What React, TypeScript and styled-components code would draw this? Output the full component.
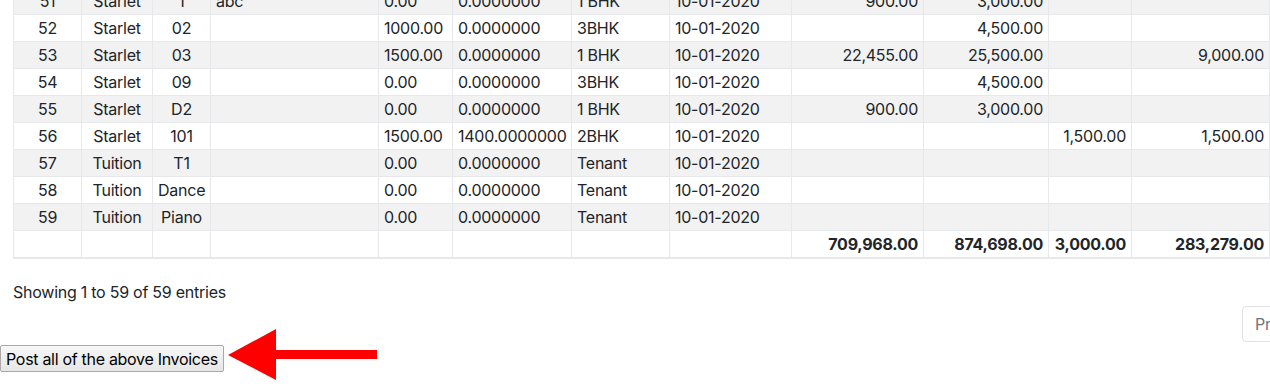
import React from 'react';
import styled, {createGlobalStyle} from "styled-components";

type Row = {
    no: string;
    group: string;
    unit: string;
    note?: string;
    rate: string;
    area: string;
    type: string;
    date: string;
    a?: string;
    b?: string;
    c?: string;
    d?: string;
}

const rows: Row[] = [
    {no: "51", group: "Starlet", unit: "1", note: "abc", rate: "0.00", area: "0.0000000", type: "1 BHK", date: "10-01-2020", a: "900.00", b: "3,000.00"},
    {no: "52", group: "Starlet", unit: "02", rate: "1000.00", area: "0.0000000", type: "3BHK", date: "10-01-2020", b: "4,500.00"},
    {no: "53", group: "Starlet", unit: "03", rate: "1500.00", area: "0.0000000", type: "1 BHK", date: "10-01-2020", a: "22,455.00", b: "25,500.00", d: "9,000.00"},
    {no: "54", group: "Starlet", unit: "09", rate: "0.00", area: "0.0000000", type: "3BHK", date: "10-01-2020", b: "4,500.00"},
    {no: "55", group: "Starlet", unit: "D2", rate: "0.00", area: "0.0000000", type: "1 BHK", date: "10-01-2020", a: "900.00", b: "3,000.00"},
    {no: "56", group: "Starlet", unit: "101", rate: "1500.00", area: "1400.0000000", type: "2BHK", date: "10-01-2020", c: "1,500.00", d: "1,500.00"},
    {no: "57", group: "Tuition", unit: "T1", rate: "0.00", area: "0.0000000", type: "Tenant", date: "10-01-2020"},
    {no: "58", group: "Tuition", unit: "Dance", rate: "0.00", area: "0.0000000", type: "Tenant", date: "10-01-2020"},
    {no: "59", group: "Tuition", unit: "Piano", rate: "0.00", area: "0.0000000", type: "Tenant", date: "10-01-2020"},
]

const colWidths = [68, 71, 58, 168, 74, 119, 98, 122, 132, 125, 83, 138]

export default function App() {
    return (
        <>
            <GlobalStyle/>
            <Page>
                <TableWrap>
                    <Table>
                        <colgroup>
                            {colWidths.map((w, i) => <col key={i} style={{width: w}}/>)}
                        </colgroup>
                        <tbody>
                        {rows.map((r, i) =>
                            <Tr key={r.no} $striped={i % 2 === 0}>
                                <Td $align="center">{r.no}</Td>
                                <Td $align="center">{r.group}</Td>
                                <Td $align="center">{r.unit}</Td>
                                <Td>{r.note}</Td>
                                <Td>{r.rate}</Td>
                                <Td>{r.area}</Td>
                                <Td>{r.type}</Td>
                                <Td>{r.date}</Td>
                                <Td $align="right">{r.a}</Td>
                                <Td $align="right">{r.b}</Td>
                                <Td $align="right">{r.c}</Td>
                                <Td $align="right">{r.d}</Td>
                            </Tr>
                        )}
                        </tbody>
                        <tfoot>
                        <Tr>
                            <Td/><Td/><Td/><Td/><Td/><Td/><Td/><Td/>
                            <Td $align="right" $bold>709,968.00</Td>
                            <Td $align="right" $bold>874,698.00</Td>
                            <Td $align="right" $bold>3,000.00</Td>
                            <Td $align="right" $bold>283,279.00</Td>
                        </Tr>
                        </tfoot>
                    </Table>
                </TableWrap>
                <Footer>
                    <Left>
                        <Info>Showing 1 to 59 of 59 entries</Info>
                        <Actions>
                            <PostButton>Post all of the above Invoices</PostButton>
                            <Arrow width="152" height="59" viewBox="0 0 152 59">
                                <polygon points="2,26 50,0 50,21 151,21 151,30 50,30 50,51" fill="#fe0000"/>
                            </Arrow>
                        </Actions>
                    </Left>
                    <Pagination>
                        <PageItem $disabled $first>Previous</PageItem>
                        <PageItem $active>1</PageItem>
                        <PageItem $disabled $last>Next</PageItem>
                    </Pagination>
                </Footer>
            </Page>
        </>
    );
}

const GlobalStyle = createGlobalStyle`
  html, body {
    margin: 0;
    padding: 0;
    background: #fff;
    overflow: hidden;
  }
  body {
    font-family: Inter, "Liberation Sans", sans-serif;
    font-size: 16px;
    letter-spacing: -0.25px;
    color: #212529;
  }
`
const Page = styled.div`
  width: 1270px;
  height: 390px;
  overflow: hidden;
`
const TableWrap = styled.div`
  padding-left: 13px;
  margin-top: -13px;
`
const Table = styled.table`
  width: 1256px;
  table-layout: fixed;
  border-collapse: collapse;
  border: 1px solid #e6e8eb;
  border-bottom: 2px solid #e6e8eb;
`
const Tr = styled.tr<{ $striped?: boolean }>`
  background: ${({$striped}) => $striped ? "#f2f2f2" : "#fff"};
`
const Td = styled.td<{ $align?: "left" | "center" | "right"; $bold?: boolean }>`
  padding: 3px 5px;
  line-height: 20px;
  height: 20px;
  border: 1px solid #e6e8eb;
  text-align: ${({$align}) => $align || "left"};
  font-weight: ${({$bold}) => $bold ? 700 : 400};
  white-space: nowrap;
  overflow: hidden;
`
const Footer = styled.div`
  display: grid;
  grid-template-columns: 1243px auto;
  align-items: start;
`
const Left = styled.div`
  display: flex;
  flex-direction: column;
  align-items: flex-start;
`
const Info = styled.div`
  padding: 21px 0 0 13px;
  line-height: 24px;
`
const Pagination = styled.ul`
  display: flex;
  list-style: none;
  margin: 47px 0 0;
  padding: 0;
`
const PageItem = styled.li<{ $disabled?: boolean; $active?: boolean; $first?: boolean; $last?: boolean }>`
  padding: 7px 12px;
  line-height: 20px;
  border: 1px solid ${({$active}) => $active ? "#007bff" : "#dee2e6"};
  margin-left: -1px;
  white-space: nowrap;
  color: ${({$disabled, $active}) => $active ? "#fff" : $disabled ? "#6c757d" : "#007bff"};
  background: ${({$active}) => $active ? "#007bff" : "#fff"};
  border-radius: ${({$first, $last}) => $first ? "4px 0 0 4px" : $last ? "0 4px 4px 0" : "0"};
`
const Actions = styled.div`
  display: flex;
  align-items: center;
  margin-top: 25px;
`
const PostButton = styled.button`
  font-family: Inter, "Liberation Sans", sans-serif;
  font-size: 16px;
  letter-spacing: -0.3px;
  color: #000;
  height: 27px;
  padding: 0 5px;
  border: 1px solid #a9a9a9;
  border-radius: 2px;
  background: linear-gradient(#f7f7f7, #e6e6e6);
`
const Arrow = styled.svg`
  margin-left: 2px;
  flex-shrink: 0;
`
